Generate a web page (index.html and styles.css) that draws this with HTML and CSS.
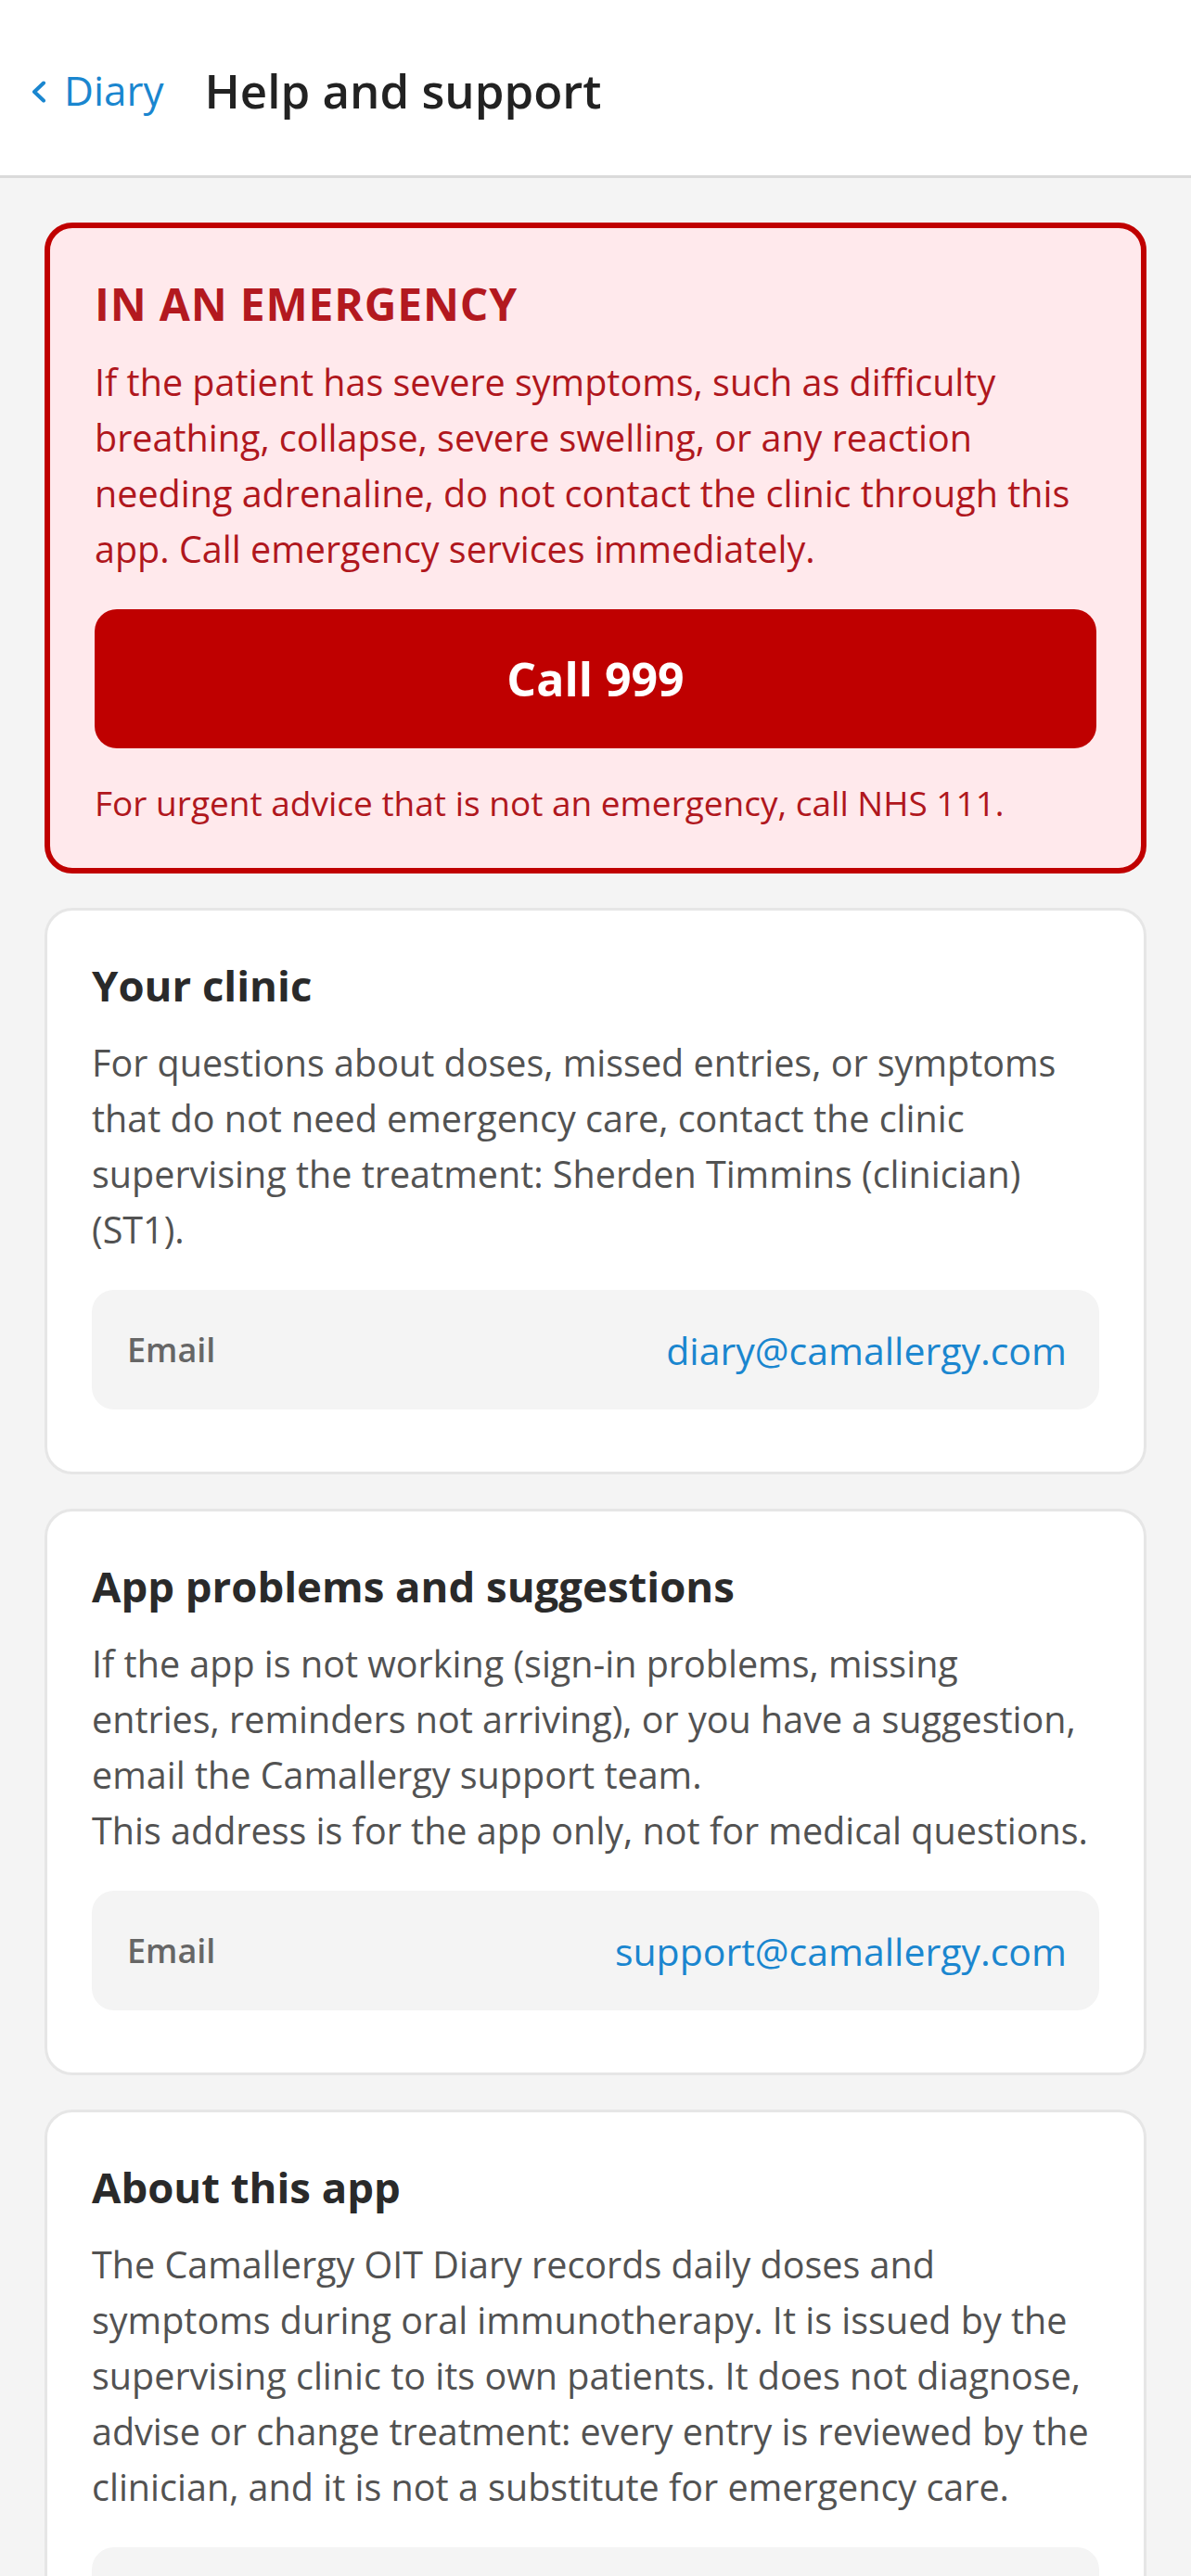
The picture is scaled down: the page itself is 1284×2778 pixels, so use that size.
FILE: index.html
```html
<!DOCTYPE html>
<html lang="en">
<head>
    <meta charset="UTF-8">
    <meta name="viewport" content="width=device-width, initial-scale=1.0">
    <title>Help and support</title>
    <link rel="stylesheet" href="styles.css">
</head>
<body>
    <header class="topbar">
        <a href="#" class="back">
            <svg class="chevron" width="17" height="24" viewBox="0 0 17 24">
                <path d="M14 2.5 L4 12 L14 21.5" fill="none" stroke="#1a86cf" stroke-width="4" stroke-linecap="round" stroke-linejoin="round"/>
            </svg>
            <span>Diary</span>
        </a>
        <h1>Help and support</h1>
    </header>

    <main class="page">
        <section class="emergency">
            <h2>IN AN EMERGENCY</h2>
            <p class="emergency-text">If the patient has severe symptoms, such as difficulty breathing, collapse, severe swelling, or any reaction needing adrenaline, do not contact the clinic through this app. Call emergency services immediately.</p>
            <a href="tel:999" class="btn-call">Call 999</a>
            <p class="urgent">For urgent advice that is not an emergency, call NHS 111.</p>
        </section>

        <section class="card">
            <h2>Your clinic</h2>
            <p class="text">For questions about doses, missed entries, or symptoms that do not need emergency care, contact the clinic supervising the treatment: Sherden Timmins (clinician) (ST1).</p>
            <div class="info-row">
                <span class="label">Email</span>
                <a href="mailto:diary@camallergy.com" class="value">diary@camallergy.com</a>
            </div>
        </section>

        <section class="card">
            <h2>App problems and suggestions</h2>
            <p class="text">If the app is not working (sign-in problems, missing<br>entries, reminders not arriving), or you have a suggestion, email the Camallergy support team.<br>This address is for the app only, not for medical questions.</p>
            <div class="info-row">
                <span class="label">Email</span>
                <a href="mailto:support@camallergy.com" class="value">support@camallergy.com</a>
            </div>
        </section>

        <section class="card">
            <h2>About this app</h2>
            <p class="text">The Camallergy OIT Diary records daily doses and symptoms during oral immunotherapy. It is issued by the supervising clinic to its own patients. It does not diagnose, advise or change treatment: every entry is reviewed by the clinician, and it is not a substitute for emergency care.</p>
            <div class="info-row">
                <span class="label">Version</span>
                <span class="value plain">1.0</span>
            </div>
        </section>
    </main>
</body>
</html>
```

FILE: styles.css
```css
body {
    font-family: 'Open Sans', 'Noto Sans', sans-serif;
    margin: 0;
    padding: 0;
    background: #f4f4f4;
    color: #2a2a2a;
}
a {
    text-decoration: none;
}
.topbar {
    display: flex;
    align-items: center;
    height: 192px;
    padding: 4px 0 0 33px;
    box-sizing: border-box;
    background: #fff;
    border-bottom: 3px solid #dadada;
}
.back {
    display: flex;
    align-items: center;
    gap: 19px;
    color: #1a86cf;
    font-size: 44px;
    margin-right: 44px;
}
.chevron {
    margin-top: 4px;
}
.topbar h1 {
    margin: 0;
    font-size: 51px;
    font-weight: 600;
    color: #222;
}
.page {
    display: flex;
    flex-direction: column;
    gap: 37px;
    padding: 48px 48px 60px;
}
.emergency {
    background: #ffe9ec;
    border: 6px solid #c00000;
    border-radius: 30px;
    padding: 50px 48px 40px;
}
.emergency h2 {
    margin: 0;
    font-size: 48px;
    line-height: 64px;
    font-weight: 700;
    letter-spacing: 0.8px;
    color: #b3191f;
}
.emergency-text {
    margin: 22px 0 0;
    font-size: 39.5px;
    line-height: 60px;
    color: #b0171d;
}
.btn-call {
    display: flex;
    align-items: center;
    justify-content: center;
    height: 150px;
    margin-top: 35px;
    background: #bf0000;
    border-radius: 24px;
    color: #fff;
    font-size: 50px;
    font-weight: 700;
}
.urgent {
    margin: 29px 0 0;
    font-size: 37px;
    line-height: 60px;
    color: #b0171d;
}
.card {
    background: #fff;
    border: 3px solid #e6e6e6;
    border-radius: 30px;
    padding: 52px 48px 48px;
}
.card h2 {
    margin: 0;
    font-size: 45.5px;
    line-height: 57px;
    font-weight: 700;
    color: #2a2a2a;
}
.text {
    margin: 25px 0 0;
    font-size: 39.5px;
    line-height: 60px;
    color: #525252;
}
.info-row {
    display: flex;
    align-items: center;
    justify-content: space-between;
    height: 129px;
    margin: 35px 0 19px;
    padding: 0 35px 0 38px;
    background: #f4f4f4;
    border-radius: 24px;
}
.label {
    font-size: 36px;
    font-weight: 600;
    color: #666;
}
.value {
    font-size: 41px;
    color: #1a86cf;
}
.value.plain {
    color: #525252;
}
```
